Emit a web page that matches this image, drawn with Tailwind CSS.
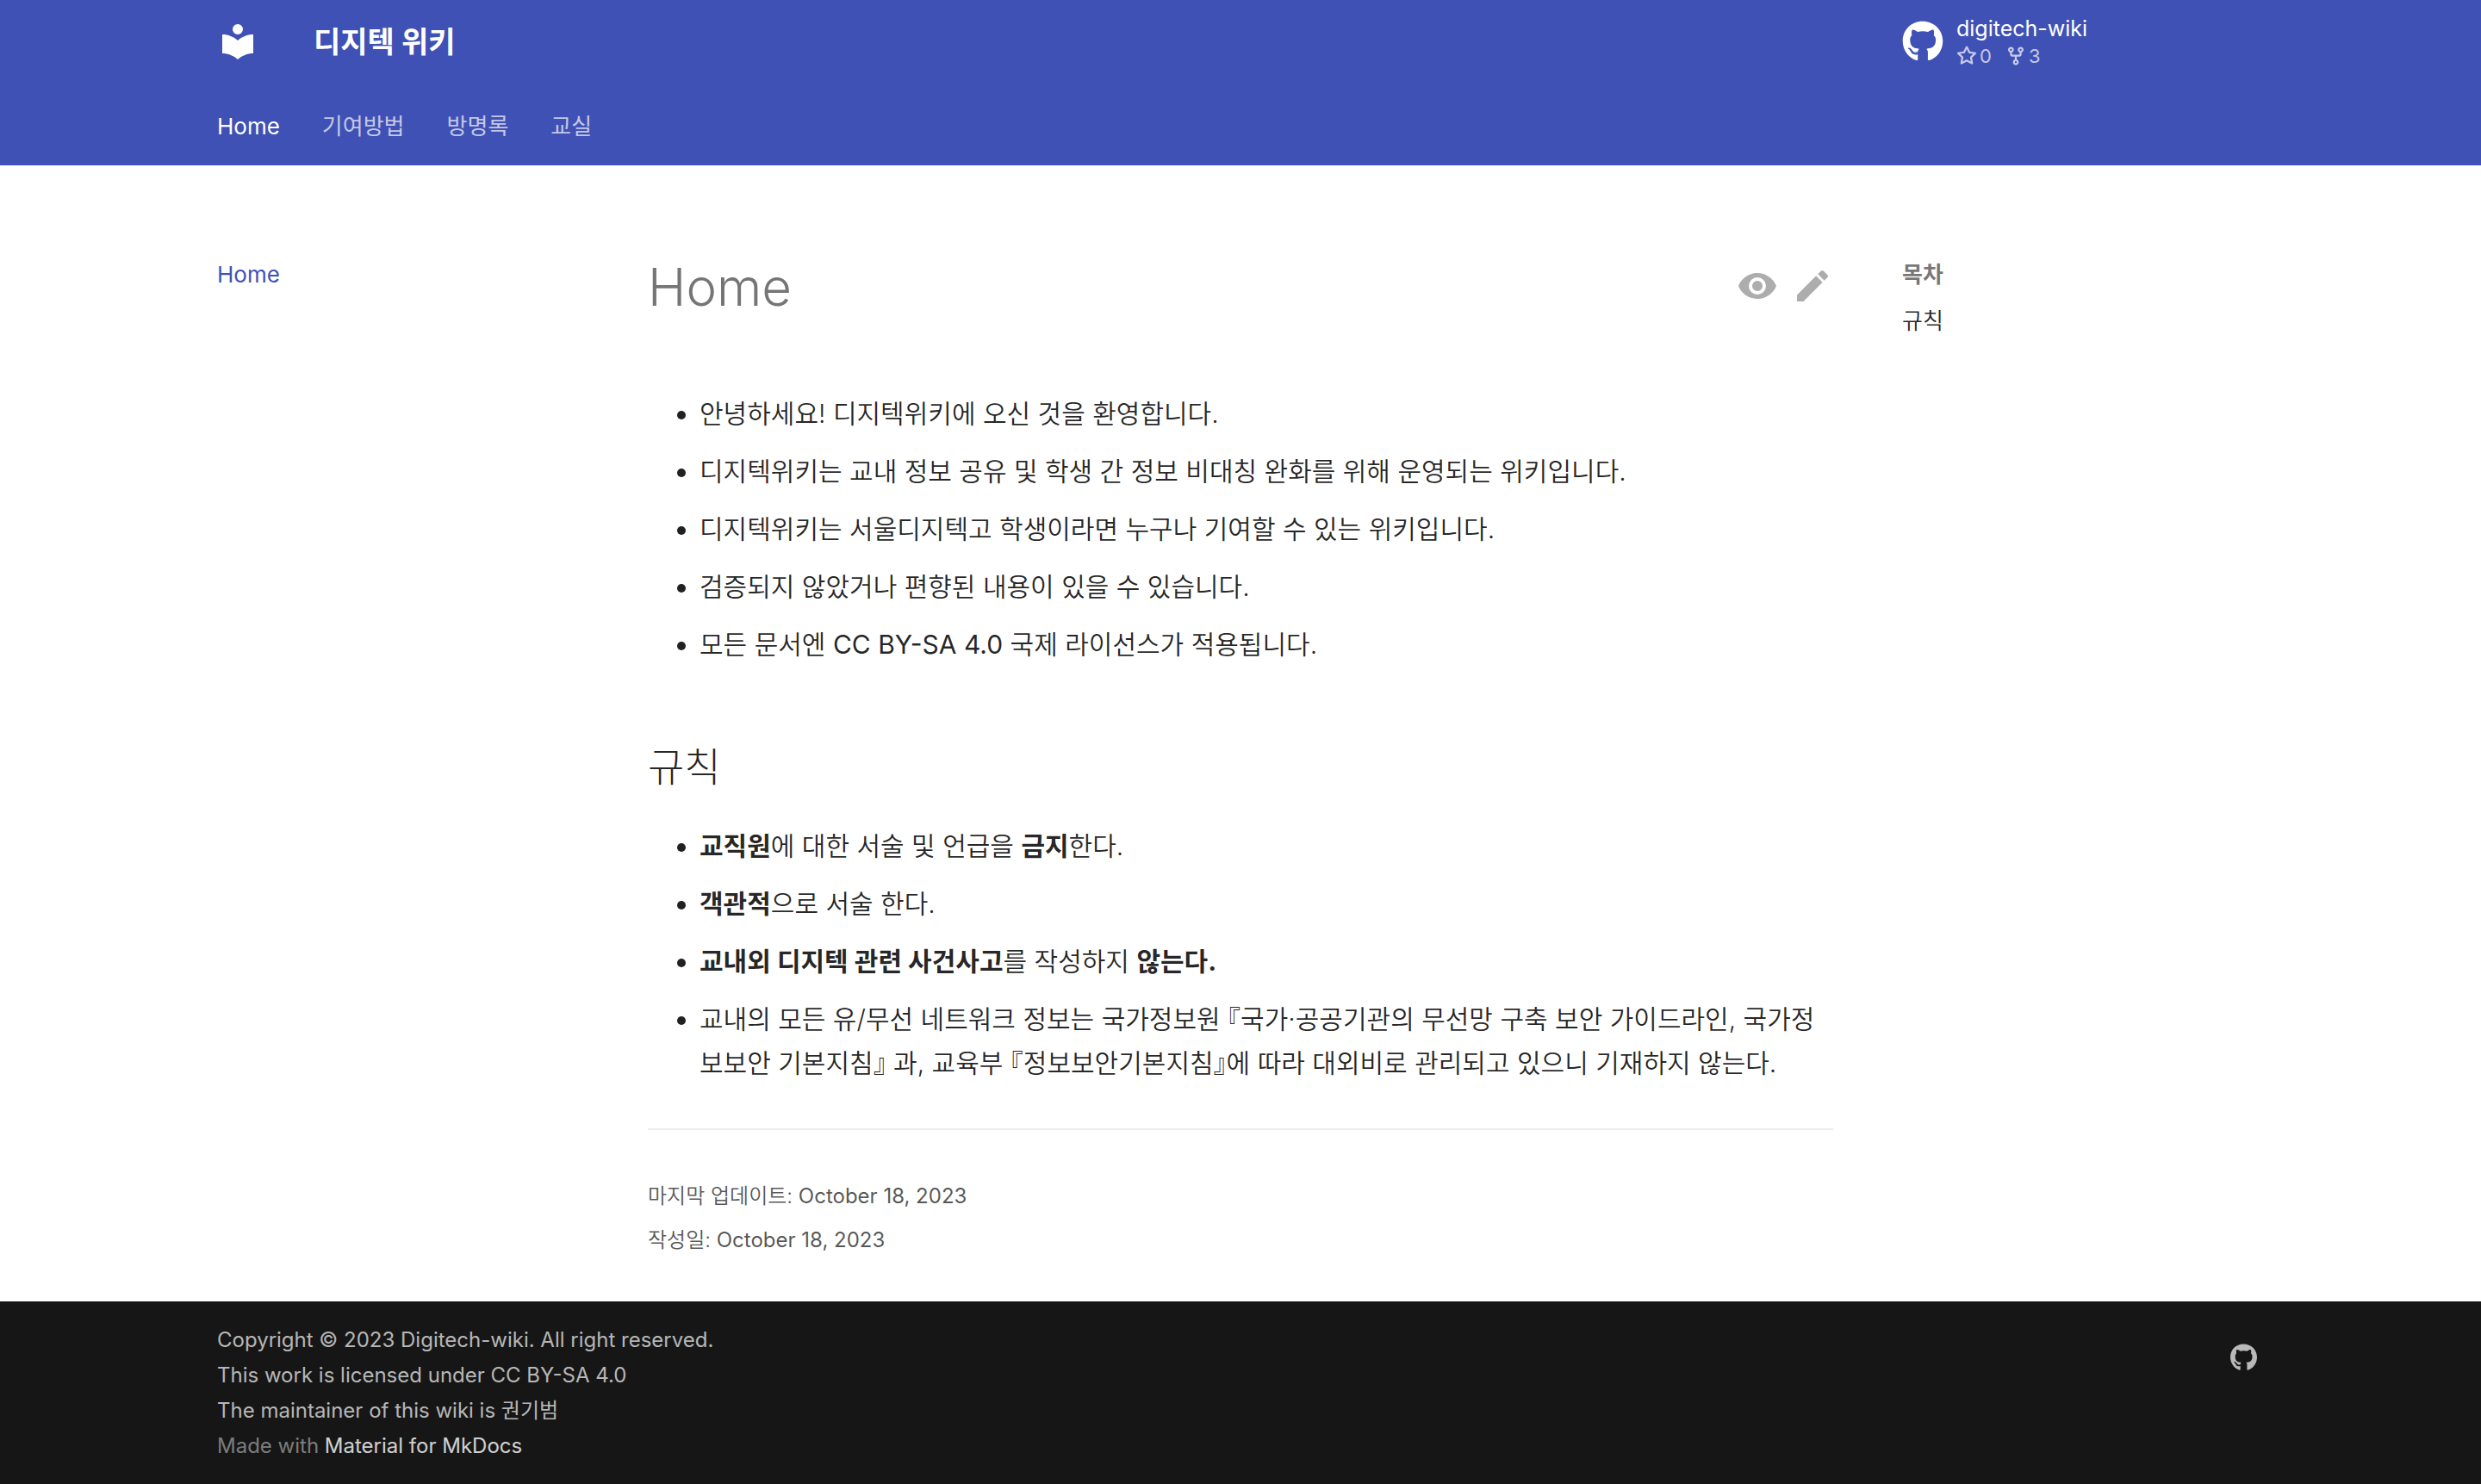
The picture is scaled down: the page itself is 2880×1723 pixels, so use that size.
<!DOCTYPE html>
<html lang="ko">
<head>
<meta charset="utf-8">
<meta name="viewport" content="width=device-width, initial-scale=1">
<title>디지텍 위키</title>
<script src="https://cdn.jsdelivr.net/npm/@tailwindcss/browser@4"></script>
</head>
<body class="flex min-h-screen flex-col bg-white font-['Inter','Noto_Sans_CJK_KR',sans-serif] text-[30px] text-black/87">
<svg class="hidden" aria-hidden="true">
  <symbol id="github" viewBox="0 0 496 512"><path fill="currentColor" d="M165.9 397.4c0 2-2.3 3.6-5.2 3.6-3.3.3-5.6-1.3-5.6-3.6 0-2 2.3-3.6 5.2-3.6 3-.3 5.6 1.3 5.6 3.6zm-31.1-4.5c-.7 2 1.3 4.3 4.3 4.9 2.6 1 5.6 0 6.2-2s-1.3-4.3-4.3-5.2c-2.6-.7-5.5.3-6.2 2.3zm44.2-1.7c-2.9.7-4.9 2.6-4.6 4.9.3 2 2.9 3.3 5.9 2.6 2.9-.7 4.9-2.6 4.6-4.6-.3-1.9-3-3.2-5.9-2.9zM244.8 8C106.1 8 0 113.3 0 252c0 110.9 69.8 205.8 169.5 239.2 12.8 2.3 17.3-5.6 17.3-12.1 0-6.2-.3-40.4-.3-61.4 0 0-70 15-84.7-29.8 0 0-11.4-29.1-27.8-36.6 0 0-22.9-15.7 1.6-15.4 0 0 24.9 2 38.6 25.8 21.9 38.6 58.6 27.5 72.9 20.9 2.3-16 8.8-27.1 16-33.7-55.9-6.2-112.3-14.3-112.3-110.5 0-27.5 7.6-41.3 23.6-58.9-2.6-6.5-11.1-33.3 2.6-67.9 20.9-6.5 69 27 69 27 20-5.6 41.5-8.5 62.8-8.5s42.8 2.9 62.8 8.5c0 0 48.1-33.6 69-27 13.7 34.7 5.2 61.4 2.6 67.9 16 17.7 25.8 31.5 25.8 58.9 0 96.5-58.9 104.2-114.8 110.5 9.2 7.9 17 22.9 17 46.4 0 33.7-.3 75.4-.3 83.6 0 6.5 4.6 14.4 17.3 12.1C428.2 457.8 496 362.9 496 252 496 113.3 383.5 8 244.8 8z"/></symbol>
</svg>

<header class="bg-[#4051b5] text-white">
  <div class="mx-auto max-w-[2440px] px-8">
    <div class="flex h-24 items-center">
      <a href="#" aria-label="디지텍 위키" class="shrink-0">
        <svg class="size-12" viewBox="0 0 24 24" fill="currentColor"><path d="M12 8a3 3 0 0 0 3-3 3 3 0 0 0-3-3 3 3 0 0 0-3 3 3 3 0 0 0 3 3m0 3.54C9.64 9.35 6.5 8 3 8v11c3.5 0 6.64 1.35 9 3.54 2.36-2.19 5.5-3.54 9-3.54V8c-3.5 0-6.64 1.35-9 3.54Z"/></svg>
      </a>
      <a href="#" class="ml-16 flex-1 text-[34px] font-bold">디지텍 위키</a>
      <a href="#" class="flex w-[420px] items-center gap-[15px]">
        <svg class="size-12"><use href="#github"/></svg>
        <span class="flex flex-col pt-0.5">
          <span class="text-[25px] leading-8">digitech-wiki</span>
          <span class="flex items-center gap-4 text-[22px] leading-8 text-white/70">
            <span class="flex items-center gap-[3px]"><svg class="size-6" viewBox="0 0 16 16" fill="currentColor"><path d="M8 .25a.75.75 0 0 1 .673.418l1.882 3.815 4.21.612a.75.75 0 0 1 .416 1.279l-3.046 2.97.719 4.192a.751.751 0 0 1-1.088.791L8 12.347l-3.766 1.98a.75.75 0 0 1-1.088-.79l.72-4.194L.818 6.374a.75.75 0 0 1 .416-1.28l4.21-.611L7.327.668A.75.75 0 0 1 8 .25Zm0 2.445L6.615 5.5a.75.75 0 0 1-.564.41l-3.097.45 2.24 2.184a.75.75 0 0 1 .216.664l-.528 3.084 2.769-1.456a.75.75 0 0 1 .698 0l2.77 1.456-.53-3.084a.75.75 0 0 1 .216-.664l2.24-2.183-3.096-.45a.75.75 0 0 1-.564-.41L8 2.694Z"/></svg>0</span>
            <span class="flex items-center gap-[3px]"><svg class="size-6" viewBox="0 0 16 16" fill="currentColor"><path d="M5 5.372v.878c0 .414.336.75.75.75h4.5a.75.75 0 0 0 .75-.75v-.878a2.25 2.25 0 1 1 1.5 0v.878a2.25 2.25 0 0 1-2.25 2.25h-1.5v2.128a2.251 2.251 0 1 1-1.5 0V8.5h-1.5A2.25 2.25 0 0 1 3.5 6.25v-.878a2.25 2.25 0 1 1 1.5 0ZM5 3.25a.75.75 0 1 0-1.5 0 .75.75 0 0 0 1.5 0Zm6.75.75a.75.75 0 1 0 0-1.5.75.75 0 0 0 0 1.5Zm-3 8.75a.75.75 0 1 0-1.5 0 .75.75 0 0 0 1.5 0Z"/></svg>3</span>
          </span>
        </span>
      </a>
    </div>
    <nav class="flex h-24 items-center gap-[49px] pt-1 text-[26px]">
      <a href="#">Home</a>
      <a href="#" class="text-white/70">기여방법</a>
      <a href="#" class="text-white/70">방명록</a>
      <a href="#" class="text-white/70">교실</a>
    </nav>
  </div>
</header>

<div class="mx-auto flex w-full max-w-[2440px] flex-1 pt-[100px] pb-10">
  <nav class="w-[484px] shrink-0 pl-8 text-[26px] leading-[54px]">
    <a href="#" class="text-[#4051b5]">Home</a>
  </nav>

  <main class="min-w-0 flex-1 px-12 font-[350]">
    <article>
      <div class="flex items-start justify-between">
        <h1 class="text-[60px] leading-[82px] font-light text-black/54">Home</h1>
        <div class="mt-4 flex gap-4 text-black/32">
          <a href="#" aria-label="소스 보기"><svg class="size-12" viewBox="0 0 24 24" fill="currentColor"><path d="M12 9a3 3 0 0 0-3 3 3 3 0 0 0 3 3 3 3 0 0 0 3-3 3 3 0 0 0-3-3m0 8a5 5 0 0 1-5-5 5 5 0 0 1 5-5 5 5 0 0 1 5 5 5 5 0 0 1-5 5m0-12.5C7 4.5 2.73 7.61 1 12c1.73 4.39 6 7.5 11 7.5s9.27-3.11 11-7.5c-1.73-4.39-6-7.5-11-7.5Z"/></svg></a>
          <a href="#" aria-label="편집"><svg class="size-12" viewBox="0 0 24 24" fill="currentColor"><path d="M20.71 7.04c.39-.39.39-1.04 0-1.41l-2.34-2.34c-.37-.39-1.02-.39-1.41 0l-1.84 1.83 3.75 3.75M3 17.25V21h3.75L17.81 9.93l-3.75-3.75L3 17.25Z"/></svg></a>
        </div>
      </div>
      <ul class="mt-[81px] flex list-disc flex-col gap-4 pl-[60px] leading-[51px]">
        <li>안녕하세요! 디지텍위키에 오신 것을 환영합니다.</li>
        <li>디지텍위키는 교내 정보 공유 및 학생 간 정보 비대칭 완화를 위해 운영되는 위키입니다.</li>
        <li>디지텍위키는 서울디지텍고 학생이라면 누구나 기여할 수 있는 위키입니다.</li>
        <li>검증되지 않았거나 편향된 내용이 있을 수 있습니다.</li>
        <li>모든 문서엔 <span class="font-normal">CC BY-SA 4.0</span> 국제 라이선스가 적용됩니다.</li>
      </ul>
      <h2 class="mt-[81px] text-[46px] leading-[70px] font-light">규칙</h2>
      <ul class="mt-8 flex list-disc flex-col gap-4 pl-[60px] leading-[51px]">
        <li><strong>교직원</strong>에 대한 서술 및 언급을 <strong>금지</strong>한다.</li>
        <li><strong>객관적</strong>으로 서술 한다.</li>
        <li><strong>교내외 디지텍 관련 사건사고</strong>를 작성하지 <strong>않는다.</strong></li>
        <li class="[font-feature-settings:'halt']">교내의 모든 유/무선 네트워크 정보는 국가정보원 『국가·공공기관의 무선망 구축 보안 가이드라인, 국가정보보안 기본지침』 과, 교육부 『정보보안기본지침』에 따라 대외비로 관리되고 있으니 기재하지 않는다.</li>
      </ul>
    </article>
    <hr class="mt-[50px] border-t-2 border-black/7">
    <div class="mt-[51px] text-[24px] leading-[51px] text-black/68">
      <p>마지막 업데이트: <time datetime="2023-10-18" class="font-normal">October 18, 2023</time></p>
      <p>작성일: <time datetime="2023-10-18" class="font-normal">October 18, 2023</time></p>
    </div>
  </main>

  <nav class="w-[484px] shrink-0 pl-8 text-[26px] leading-[54px]" aria-labelledby="toc">
    <h2 id="toc" class="font-bold text-black/54">목차</h2>
    <a href="#" class="font-[350]">규칙</a>
  </nav>
</div>

<footer class="bg-[#161616] text-white/70">
  <div class="mx-auto flex max-w-[2440px] items-start justify-between py-6 pr-10 pl-8">
    <div class="text-[24px] leading-[41px]">
      <p>Copyright © 2023 Digitech-wiki. All right reserved.</p>
      <p>This work is licensed under CC BY-SA 4.0</p>
      <p>The maintainer of this wiki is 권기범</p>
      <p class="text-white/45">Made with <a href="#" class="text-white/80">Material for MkDocs</a></p>
    </div>
    <a href="#" aria-label="GitHub" class="mt-[25px]"><svg class="h-8 w-[31px]"><use href="#github"/></svg></a>
  </div>
</footer>
</body>
</html>
